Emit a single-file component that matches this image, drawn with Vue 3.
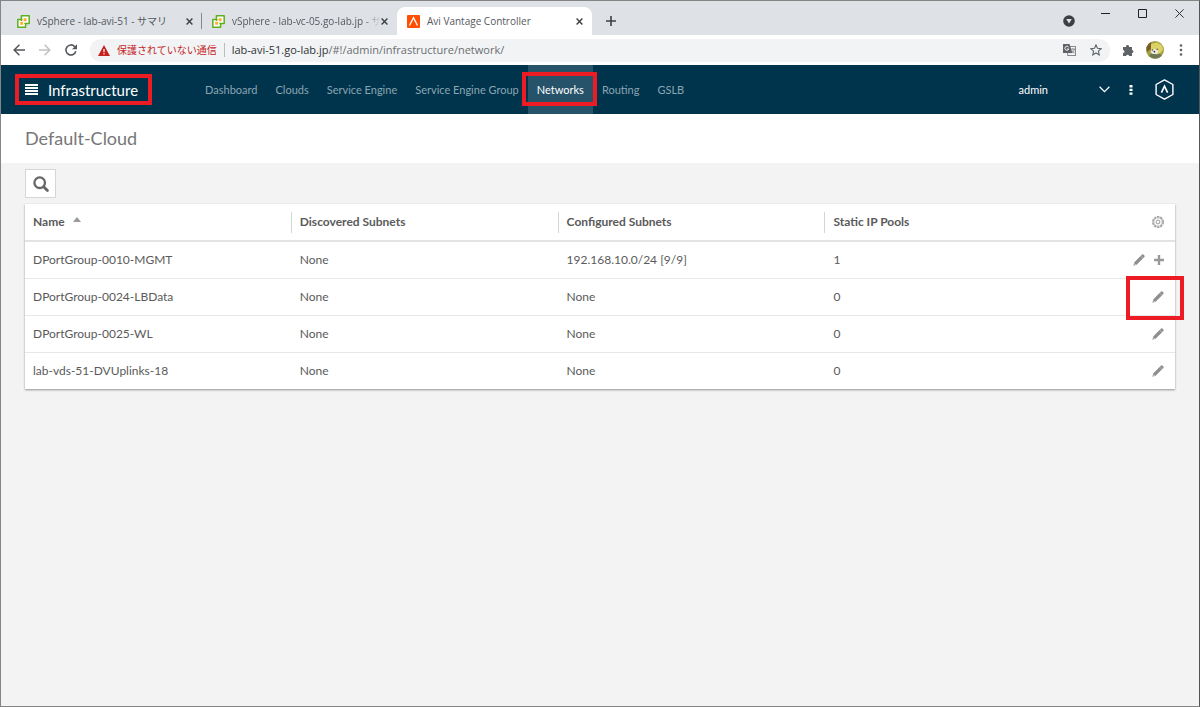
<script setup>
import { ref } from 'vue'

const tabs = [
  { title: 'vSphere - lab-avi-51 - サマリ', icon: 'vsphere' },
  { title: 'vSphere - lab-vc-05.go-lab.jp - サ', icon: 'vsphere' },
  { title: 'Avi Vantage Controller', icon: 'avi', active: true },
]
const nav = ['Dashboard', 'Clouds', 'Service Engine', 'Service Engine Group', 'Networks', 'Routing', 'GSLB']
const current = ref('Networks')
const columns = ['Name', 'Discovered Subnets', 'Configured Subnets', 'Static IP Pools']
const rows = [
  { name: 'DPortGroup-0010-MGMT', discovered: 'None', configured: '192.168.10.0/24 [9/9]', pools: 1, add: true },
  { name: 'DPortGroup-0024-LBData', discovered: 'None', configured: 'None', pools: 0, marked: true },
  { name: 'DPortGroup-0025-WL', discovered: 'None', configured: 'None', pools: 0 },
  { name: 'lab-vds-51-DVUplinks-18', discovered: 'None', configured: 'None', pools: 0 },
]
</script>

<template>
  <div class="window">
    <div class="tabstrip">
      <div v-for="t in tabs" :key="t.title" class="tab" :class="{ active: t.active }">
        <svg v-if="t.icon === 'vsphere'" class="fav" width="13" height="13" viewBox="0 0 13 13">
          <path d="M4.400 .8h7.800v7.600H8.600v3.800H.8V4.600h3.600z" fill="#fff" stroke="#5eb01e" stroke-width="1.500" stroke-linejoin="round" />
          <path d="M4.400 4.600v1.400M4.400 8.400h1M8.600 8.400H7.400M4.400 4.600h1.200" fill="none" stroke="#5eb01e" stroke-width="1.300" />
          <rect x="6.600" y="3.200" width="3" height="3" fill="#fbb034" />
          <rect x="3.200" y="6.800" width="3" height="3" fill="#fbb034" />
        </svg>
        <svg v-else class="fav" width="13" height="13" viewBox="0 0 13 13">
          <rect width="13" height="13" rx="1" fill="#ff4e00" />
          <path d="M2.500 10.500 6.500 2.700l4 7.800" fill="none" stroke="#fff" stroke-width="1.300" />
        </svg>
        <span class="tab-title">{{ t.title }}</span>
        <button class="plain" aria-label="Close tab">
          <svg width="7" height="7" viewBox="0 0 7 7"><path d="M.6.6l5.800 5.800M6.400.6.6 6.400" stroke="#3c4043" stroke-width="1.400" /></svg>
        </button>
      </div>
      <button class="plain newtab" aria-label="New tab">
        <svg width="10" height="10" viewBox="0 0 10 10"><path d="M5 0v10M0 5h10" stroke="#3c4043" stroke-width="1.600" /></svg>
      </button>
      <button class="plain tabsearch" aria-label="Search tabs">
        <svg width="12" height="12" viewBox="0 0 12 12"><circle cx="6" cy="6" r="5.800" fill="#3c4043" /><path d="M3.200 4h5.600L6 8.600z" fill="#dee1e6" /></svg>
      </button>
      <div class="winbuttons">
        <button class="plain" aria-label="Minimize"><svg width="9" height="9" viewBox="0 0 9 9"><path d="M0 4.500h9" stroke="#222" /></svg></button>
        <button class="plain" aria-label="Maximize"><svg width="9" height="9" viewBox="0 0 9 9"><path d="M.5.5h8v8h-8z" fill="none" stroke="#222" /></svg></button>
        <button class="plain" aria-label="Close"><svg width="9" height="9" viewBox="0 0 9 9"><path d="M.4.4l8.200 8.200M8.600.4.4 8.600" stroke="#333" /></svg></button>
      </div>
    </div>

    <div class="toolbar">
      <button class="plain navbtn" aria-label="Back"><svg width="12" height="12" viewBox="0 0 12 12"><path d="M12 6H1.200M6.400.8 1.200 6l5.200 5.200" fill="none" stroke="#54575b" stroke-width="1.500" /></svg></button>
      <button class="plain navbtn" aria-label="Forward" disabled><svg width="12" height="12" viewBox="0 0 12 12"><path d="M0 6h10.800M5.600.8 10.800 6l-5.200 5.200" fill="none" stroke="#bfc1c4" stroke-width="1.500" /></svg></button>
      <button class="plain navbtn" aria-label="Reload"><svg width="12" height="12" viewBox="0 0 12 12"><path d="M10.800 7.200A5 5 0 1 1 9.700 2.600" fill="none" stroke="#54575b" stroke-width="1.600" /><path d="M12 .2v5H7z" fill="#54575b" /></svg></button>
      <div class="omnibox">
        <svg width="12" height="11" viewBox="0 0 12 11"><path d="M6 0l6 11H0z" fill="#c5221f" /><path d="M6 4v3.300M6 8.300v1.300" stroke="#fff" stroke-width="1.200" /></svg>
        <span class="warn">保護されていない通信</span>
        <span class="url"><b>lab-avi-51.go-lab.jp</b>/#!/admin/infrastructure/network/</span>
        <button class="plain" aria-label="Translate">
          <svg width="13" height="12" viewBox="0 0 13 12">
            <rect x="4.700" y="2.500" width="7.800" height="9" fill="#f1f3f4" stroke="#85888c" />
            <path d="M0 0h6.500l2.800 9H0z" fill="#5f6368" />
            <path d="M5.600 3.100A2 2 0 1 0 5.800 5H4" fill="none" stroke="#fff" stroke-width=".9" />
            <path d="M8 5.200h4M10 4.200v1M11.400 5.200c-.4 1.800-1.500 3-2.600 3.700M9 6.500c.6 1.300 1.400 2 2.600 2.600" fill="none" stroke="#777" stroke-width=".8" />
          </svg>
        </button>
        <button class="plain" aria-label="Bookmark"><svg width="12" height="12" viewBox="0 0 12 12"><path d="M6 .9l1.500 3.400 3.700.4-2.800 2.500.8 3.700L6 9l-3.200 1.900.8-3.700L.8 4.700l3.700-.4z" fill="none" stroke="#5f6368" stroke-width="1.100" /></svg></button>
      </div>
      <button class="plain" aria-label="Extensions"><svg width="12" height="12" viewBox="0 0 12 12"><path d="M1 3h3a1.600 1.600 0 1 1 3.100 0H10v3a1.500 1.500 0 1 1 0 3v3H7.200a1.600 1.600 0 0 0-3.100 0H1V9a1.500 1.500 0 1 0 0-3z" fill="#5f6368" /></svg></button>
      <button class="plain" aria-label="Profile">
        <svg width="18" height="18" viewBox="0 0 18 18">
          <circle cx="9" cy="9" r="9" fill="#a6a343" />
          <path d="M.4 6.500A9 9 0 0 1 5 1l1 6-5 4z" fill="#7b5a2b" />
          <path d="M3 14.800l3-3 8 1 1.800 2A9 9 0 0 1 3 14.800z" fill="#6e7a55" />
          <path d="M5 3l6-1.500 5 3 1 4-2 3-4 2-6-2z" fill="#ddd365" />
          <ellipse cx="8.500" cy="10.500" rx="3.600" ry="2.600" fill="#e9e9dc" />
          <circle cx="6.400" cy="9" r=".8" fill="#444" /><circle cx="11.200" cy="8.200" r=".8" fill="#555" /><circle cx="8.400" cy="10.600" r=".9" fill="#333" />
        </svg>
      </button>
      <button class="plain menu" aria-label="Browser menu"><svg width="4" height="12" viewBox="0 0 4 12" fill="#5f6368"><circle cx="2" cy="1.500" r="1.300" /><circle cx="2" cy="6" r="1.300" /><circle cx="2" cy="10.500" r="1.300" /></svg></button>
    </div>

    <header class="appbar">
      <button class="plain brand">
        <svg width="13" height="11" viewBox="0 0 13 11"><path d="M0 0h13v2H0zM0 3h13v2H0zM0 6h13v2H0zM0 9h13v2H0z" fill="#fff" /></svg>
        <span>Infrastructure</span>
        <i class="mark"></i>
      </button>
      <nav>
        <a v-for="n in nav" :key="n" href="#" :class="{ on: n === current }" @click.prevent="current = n">{{ n }}<i v-if="n === 'Networks'" class="mark"></i></a>
      </nav>
      <button class="plain user">
        <span>admin</span>
        <svg width="11" height="7" viewBox="0 0 11 7"><path d="M.6.8l4.900 4.800L10.400.8" fill="none" stroke="#fff" stroke-width="1.200" /></svg>
      </button>
      <button class="plain more" aria-label="More"><svg width="4" height="10" viewBox="0 0 4 10" fill="#fff"><path d="M.5 0h3v2.400h-3zM.5 3.700h3v2.400h-3zM.5 7.400h3v2.400h-3z" /></svg></button>
      <svg class="logo" width="19" height="21" viewBox="0 0 19 21"><path d="M9.500.9l8.400 4.600v10l-8.400 4.600L1.100 15.500v-10z" fill="none" stroke="#fff" stroke-width="1.400" stroke-linejoin="round" /><path d="M6.400 13.600l3.100-6.400 3.100 6.400" fill="none" stroke="#fff" stroke-width="1.600" /></svg>
    </header>

    <h1>Default-Cloud</h1>

    <main>
      <button class="search" aria-label="Search">
        <svg width="16" height="16" viewBox="0 0 16 16"><circle cx="6.700" cy="6.700" r="5.300" fill="none" stroke="#666" stroke-width="2.300" /><path d="M10.700 10.700l3.700 3.700" stroke="#666" stroke-width="2.800" stroke-linecap="round" /></svg>
      </button>
      <table>
        <thead>
          <tr>
            <th v-for="(c, i) in columns" :key="c" scope="col"><div class="head">{{ c }}<svg v-if="i === 0" width="8" height="5" viewBox="0 0 8 5"><path d="M4 0l4 5H0z" fill="#999" /></svg></div></th>
            <th scope="col" class="actions">
              <button class="plain" aria-label="Table settings">
                <svg width="12" height="12" viewBox="0 0 12 12" fill="none" stroke="#999"><circle cx="6" cy="6" r="5.300" stroke-width="1.300" stroke-dasharray="2.500 .83" /><circle cx="6" cy="6" r="4.200" stroke-width=".8" /><circle cx="6" cy="6" r="1.900" stroke-width="1" /></svg>
              </button>
            </th>
          </tr>
        </thead>
        <tbody>
          <tr v-for="r in rows" :key="r.name">
            <td>{{ r.name }}</td>
            <td>{{ r.discovered }}</td>
            <td>{{ r.configured }}</td>
            <td>{{ r.pools }}</td>
            <td class="actions">
              <div>
                <button class="plain" :aria-label="'Edit ' + r.name">
                  <svg width="12" height="12" viewBox="0 0 12 12"><path d="M9.100.6q.7-.6 1.300 0l1 1q.6.600 0 1.300L10.400 4 8 1.600zM7.500 2.100l2.400 2.400-6.300 6.300L.4 11.700l.8-3.300z" fill="#8f8f8f" /><path d="M8 1.600 10.400 4l-.5.5-2.400-2.400z" fill="#8f8f8f" /><path d="M1.300 9.600l1.200 1.200" stroke="#fff" stroke-width=".8" /></svg>
                </button>
                <button v-if="r.add" class="plain" :aria-label="'Add to ' + r.name">
                  <svg width="10" height="10" viewBox="0 0 10 10"><path d="M5 0v10M0 5h10" stroke="#999" stroke-width="2.400" /></svg>
                </button>
                <i v-if="r.marked" class="mark"></i>
              </div>
            </td>
          </tr>
        </tbody>
      </table>
    </main>
  </div>
</template>

<style>
body { background: #f3f3f3; }
</style>

<style scoped>
* { box-sizing: border-box; }
.window {
  min-height: 100vh;
  border: 1px solid #858585;
  border-right-color: #555;
  background: #f3f3f3;
  font-family: Lato, "Open Sans", sans-serif;
  color: #5a5a5a;
}
.plain { border: 0; padding: 0; background: none; font: inherit; color: inherit; display: flex; align-items: center; justify-content: center; }
svg { display: block; flex: none; }

.tabstrip { height: 34px; background: #dee1e6; display: flex; align-items: center; padding-left: 6px; font: 10px/16px "Open Sans", "Noto Sans CJK JP", sans-serif; color: #54585d; padding-top: 6px; }
.tab { width: 195px; height: 28px; display: flex; align-items: center; padding: 0 9px 0 10px; gap: 7px; }
.tab:first-child { position: relative; }
.tab:first-child::after { content: ""; position: absolute; right: 0; top: 6px; height: 16px; border-right: 1px solid #85898e; }
.tab.active { background: #fff; border-radius: 8px 8px 0 0; }
.tab-title { flex: 1; min-width: 0; margin-right: -7px; white-space: nowrap; }
.tab:nth-child(2) .tab-title { mask-image: linear-gradient(to right, #000 88%, transparent); }
.newtab { margin-left: 14px; }
.tabsearch { margin-left: auto; }
.winbuttons { display: flex; gap: 28px; align-self: flex-start; margin: 0 15px 0 26px; height: 12px; align-items: center; }

.toolbar { height: 30px; background: #fff; display: flex; align-items: center; padding: 0 16px 0 11px; gap: 12px; }
.navbtn { width: 14px; }
.menu { margin-left: 3px; }
.omnibox { flex: 1; min-width: 0; height: 23px; border-radius: 12px; background: #f1f3f4; display: flex; align-items: center; gap: 14px; padding: 0 8px; font: 11px/18px "Open Sans", "Noto Sans CJK JP", sans-serif; color: #6b6e72; }
.warn { color: #c5221f; font-size: 10px; margin-left: -7px; padding-right: 7px; border-right: 1px solid #b9bcc0; line-height: 14px; white-space: nowrap; }
.url { flex: 1; margin-left: -7px; white-space: nowrap; overflow: hidden; }
.url b { font-weight: 400; color: #303336; }

.appbar { height: 49px; background: #00344d; color: #fff; display: flex; align-items: center; padding: 0 25px 0 24px; }
.brand { position: relative; gap: 10px; font-size: 15px; line-height: 20px; }
.mark { position: absolute; border: 4px solid #ed1c24; pointer-events: none; }
.brand .mark { inset: -6px -14px -5px -10px; }
nav { display: flex; align-self: stretch; margin-left: 58px; margin-right: auto; font-size: 11px; line-height: 16px; }
nav a { position: relative; display: flex; align-items: center; padding: 0 9px; color: #8ba5b1; text-decoration: none; white-space: nowrap; }
nav .on { background: #26536a; color: #fff; }
nav .mark { inset: 7px -4px 8px -6px; z-index: 1; }
.user { font-size: 11px; gap: 51px; }
.more { margin: 0 22px 0 19px; }

h1 { margin: 0; height: 49px; background: #fff; padding: 0 24px; font-size: 18px; font-weight: 400; line-height: 49px; color: #777; }

main { padding: 6px 24px; }
.search { width: 31px; height: 29px; border: 1px solid #d6d6d6; background: #fff; padding: 0; display: flex; align-items: center; justify-content: center; }
table { width: 100%; margin-top: 6px; table-layout: fixed; border-collapse: collapse; background: #fff; box-shadow: 0 1px 2px rgba(0, 0, 0, .4); font-size: 12px; line-height: 16px; }
th, td { width: 23.2%; height: 37px; padding: 0 0 0 8px; text-align: left; border-bottom: 1px solid #e8e8e8; }
th { border-bottom: 2px solid #e3e3e3; }
tbody tr:last-child td { border-bottom: 0; }
.head { height: 21px; display: flex; align-items: center; gap: 8px; border-right: 1px solid #d5d5d5; }
.head svg { margin-bottom: 5px; }
th:nth-child(4) .head { border-right: 0; }
.actions { width: auto; padding: 0 11px 0 0; }
.actions div { display: flex; align-items: center; justify-content: flex-end; gap: 9px; position: relative; }
th.actions button { margin-left: auto; }
.actions .mark { width: 58px; height: 44px; right: -20px; top: -15px; }
</style>
